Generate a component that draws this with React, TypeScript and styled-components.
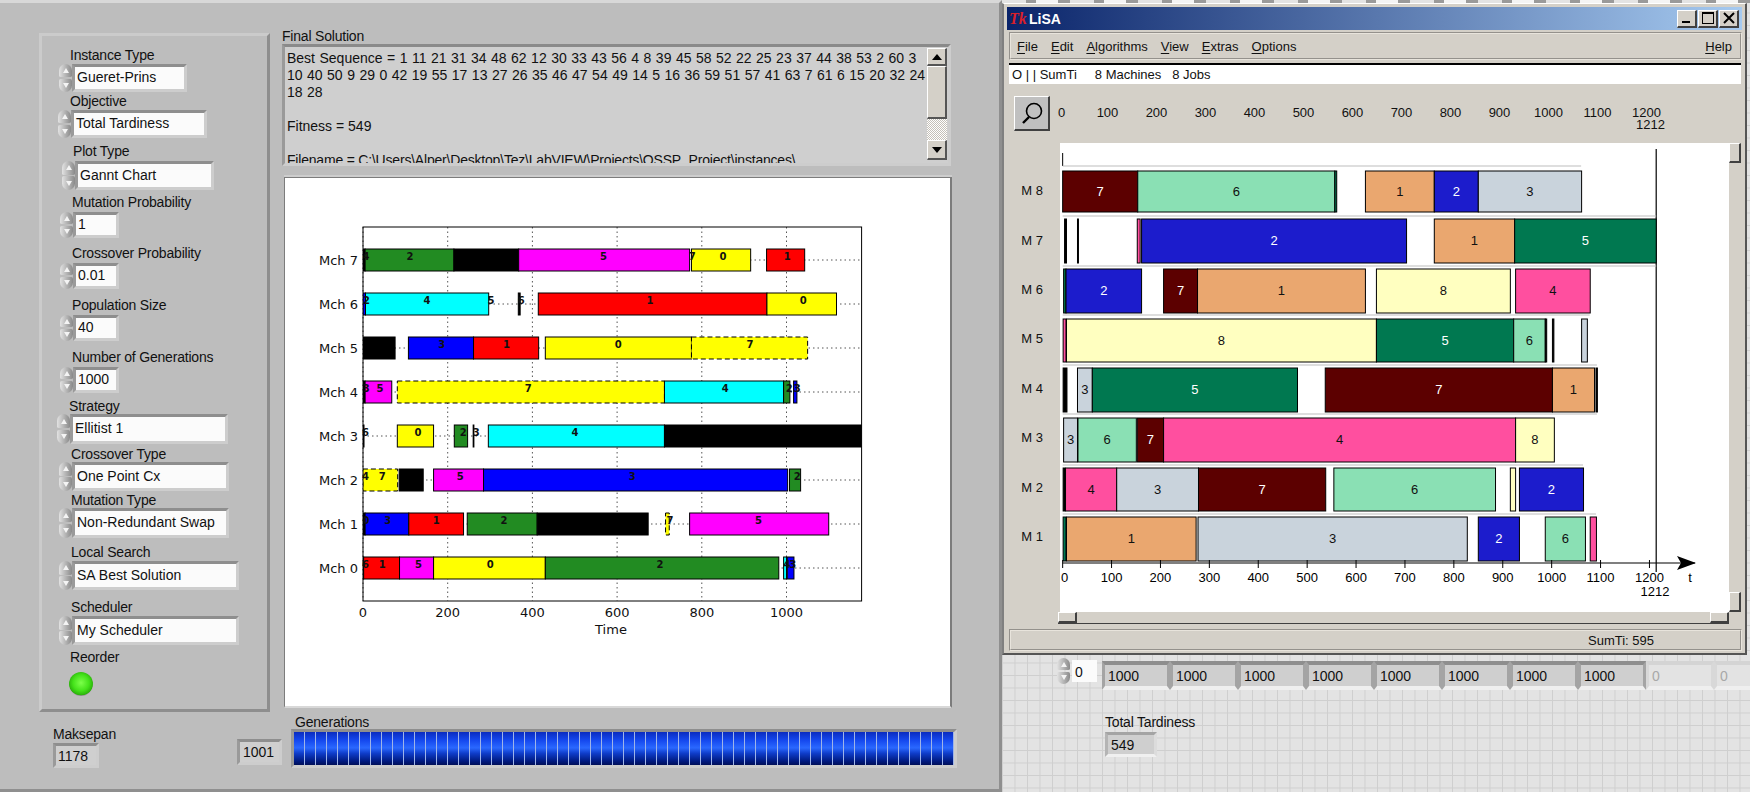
import React from 'react';
import styled, { createGlobalStyle } from 'styled-components';

const GlobalStyle = createGlobalStyle`
    html, body {
        margin: 0;
        padding: 0;
        background: #e3e3e3;
    }
    * {
        box-sizing: border-box;
    }
`;

const Page = styled.div`
    display: flex;
    width: 1750px;
    height: 792px;
    overflow: hidden;
    font-family: 'Liberation Sans', Arial, sans-serif;
    color: #111;
`;

/* ---------- LabVIEW front panel ---------- */

const FrontPanel = styled.div`
    flex: 0 0 1002px;
    height: 792px;
    background: #bdbdbd;
    border-top: 3px solid #d8d8d8;
    border-right: 3px solid #8f8f8f;
    border-bottom: 3px solid #8f8f8f;
`;

const MainRow = styled.div`
    display: flex;
    height: 709px;
    padding: 25px 0 0 39px;
`;

const GroupBox = styled.div`
    width: 231px;
    height: 679px;
    margin-top: 5px;
    border-style: solid;
    border-width: 3px;
    border-color: #cbcbcb #8e8e8e #8e8e8e #cbcbcb;
`;

const Control = styled.div<{ $top: number }>`
    margin-top: ${(p) => p.$top}px;
`;

const Label = styled.div<{ $left?: number }>`
    height: 16px;
    margin-left: ${(p) => p.$left ?? 0}px;
    font-size: 14px;
    letter-spacing: -0.2px;
    line-height: 16px;
    white-space: nowrap;
`;

const FieldRow = styled.div<{ $left: number; $gap: number }>`
    display: flex;
    align-items: center;
    margin-left: ${(p) => p.$left}px;
    margin-top: ${(p) => p.$gap}px;
`;

const SpinnerBody = styled.div<{ $height: number }>`
    display: flex;
    flex: 0 0 13px;
    flex-direction: column;
    justify-content: space-between;
    height: ${(p) => p.$height}px;
`;

const SpinButton = styled.div<{ $down?: boolean }>`
    display: flex;
    align-items: center;
    justify-content: center;
    height: 48%;
    background: linear-gradient(90deg, #e2e2e2, #a4a4a4 70%, #8a8a8a);
    border-radius: ${(p) => (p.$down ? '2px 2px 7px 7px' : '7px 7px 2px 2px')};
    &::after {
        content: '';
        border-left: 3px solid transparent;
        border-right: 3px solid transparent;
        border-top: ${(p) => (p.$down ? '5px solid #f4f4f4' : 'none')};
        border-bottom: ${(p) => (p.$down ? 'none' : '5px solid #f4f4f4')};
    }
`;

const Field = styled.div<{ $width: number; $height: number; $indicator?: boolean }>`
    display: flex;
    align-items: center;
    width: ${(p) => p.$width}px;
    height: ${(p) => p.$height}px;
    padding: 0 0 ${(p) => (p.$indicator ? 0 : 2)}px 2px;
    background: ${(p) => (p.$indicator ? '#cfcfcf' : '#fbfbfb')};
    border-style: solid;
    border-width: 3px;
    border-color: #8e8e8e #cdcdcd #cdcdcd #9a9a9a;
    font-size: 14px;
    white-space: nowrap;
`;

const Led = styled.div`
    width: 24px;
    height: 24px;
    margin: 7px 0 0 27px;
    border-radius: 50%;
    background: radial-gradient(circle at 50% 45%, #7cff4a 0, #44e21a 45%, #2db40c 68%, #8e8e8e 72%, #e0e0e0 100%);
`;

const SolutionColumn = styled.div`
    display: flex;
    flex-direction: column;
    width: 670px;
    margin-left: 12px;
`;

const TextBox = styled.div`
    display: flex;
    width: 669px;
    height: 122px;
    background: #cfcfcf;
    border-style: solid;
    border-width: 3px;
    border-color: #8a8a8a #cdcdcd #cdcdcd #9a9a9a;
`;

const TextContent = styled.div`
    flex: 1;
    min-width: 0;
    overflow: hidden;
    padding: 3px 0 0 2px;
    font-size: 14px;
    line-height: 17px;
`;

const TextLine = styled.div<{ $numbers?: boolean; $tight?: boolean }>`
    min-height: 17px;
    white-space: pre;
    word-spacing: ${(p) => (p.$numbers ? 0.58 : 0)}px;
    letter-spacing: ${(p) => (p.$tight ? -0.2 : 0)}px;
`;

const ScrollColumn = styled.div`
    display: flex;
    flex-direction: column;
    width: 20px;
    margin: 1px 1px 2px 0;
`;

const ScrollButton = styled.div<{ $height: number }>`
    display: flex;
    align-items: center;
    justify-content: center;
    height: ${(p) => p.$height}px;
    background: #d4d0c8;
    border-style: solid;
    border-width: 1px 2px 2px 1px;
    border-color: #ffffff #555 #555 #ffffff;
`;

const ArrowUp = styled.div`
    border-left: 5px solid transparent;
    border-right: 5px solid transparent;
    border-bottom: 6px solid #000;
`;

const ArrowDown = styled.div`
    border-left: 5px solid transparent;
    border-right: 5px solid transparent;
    border-top: 6px solid #000;
`;

const ScrollTrack = styled.div`
    height: 21px;
    background: repeating-conic-gradient(#ffffff 0 25%, #c4c0b8 0 50%) 0 0 / 2px 2px;
`;

const ChartFrame = styled.div`
    width: 668px;
    height: 531px;
    margin: 11px 0 0 2px;
    background: #fff;
    border-style: solid;
    border-width: 1px 2px 2px 1px;
    border-color: #7c7c7c #7c7c7c #d8d8d8 #7c7c7c;
    box-shadow: 0 -2px 0 #cdcdcd;
`;

const BottomRow = styled.div`
    display: flex;
    padding-left: 53px;
`;

const MaksepanBlock = styled.div`
    width: 46px;
    margin-top: 14px;
`;

const MaksepanField = styled(Field)`
    margin-top: 1px;
`;

const CounterField = styled(Field)`
    margin: 27px 0 0 138px;
    padding-left: 3px;
`;

const GenerationsBlock = styled.div`
    width: 666px;
    margin: 2px 0 0 9px;
`;

const GenerationsBar = styled.div`
    height: 39px;
    margin-top: -1px;
    border-style: solid;
    border-width: 3px;
    border-color: #8e8e8e #cdcdcd #cdcdcd #9a9a9a;
    background:
        repeating-linear-gradient(90deg, transparent 0 10px, #9fb4e8 10px 11px),
        linear-gradient(180deg, #0a2cc0 0, #1548ee 25%, #2a68ff 48%, #0f3cc8 65%, #001a80 88%, #000f58 100%);
`;

/* ---------- right side: LabVIEW diagram grid and LiSA window ---------- */

const GridArea = styled.div`
    flex: 1;
    min-width: 0;
    height: 792px;
    background-color: #e3e3e3;
    background-image:
        linear-gradient(#cfcfcf 1px, transparent 1px),
        linear-gradient(90deg, #cfcfcf 1px, transparent 1px);
    background-size: 12.5px 12.5px;
`;

const TopStrip = styled.div`
    height: 3px;
    background: repeating-linear-gradient(90deg, #e3e3e3 0 24px, #9a9a9a 24px 34px, #f4f4f4 34px 56px, #9a9a9a 56px 68px);
`;

const LisaWindow = styled.div`
    display: flex;
    flex-direction: column;
    width: 745px;
    height: 652px;
    padding: 3px 3px 0 3px;
    background: #d4d0c8;
    border-style: solid;
    border-width: 0 2px 2px 2px;
    border-color: #555;
    border-left-color: #808080;
    border-top: 1px solid #fff;
`;

const TitleBar = styled.div`
    display: flex;
    align-items: center;
    flex: 0 0 23px;
    padding: 0 3px 0 2px;
    background: linear-gradient(90deg, #0a246a, #a6caf0);
    color: #fff;
    font-size: 14px;
    font-weight: bold;
`;

const TkLogo = styled.span`
    width: 20px;
    color: #d8202a;
    font-family: 'Liberation Serif', serif;
    font-size: 16px;
    font-style: italic;
`;

const WindowButtons = styled.div`
    display: flex;
    gap: 1px;
    margin-left: auto;
`;

const WindowButton = styled.div`
    display: flex;
    align-items: center;
    justify-content: center;
    width: 20px;
    height: 18px;
    background: #d4d0c8;
    border-style: solid;
    border-width: 1px 2px 2px 1px;
    border-color: #fff #404040 #404040 #fff;
`;

const MenuBar = styled.div`
    display: flex;
    align-items: center;
    gap: 13px;
    height: 28px;
    margin: 2px 0 0 2px;
    padding: 0 8px 0 6px;
    border: 2px groove #e8e4dc;
    font-size: 13px;
`;

const MenuItem = styled.span<{ $right?: boolean }>`
    margin-left: ${(p) => (p.$right ? 'auto' : '0')};
    u {
        text-underline-offset: 2px;
    }
`;

const InfoBar = styled.div`
    display: flex;
    align-items: center;
    height: 21px;
    margin: 3px 1px 0 2px;
    padding-left: 3px;
    background: #fff;
    border-top: 2px solid #000;
    font-size: 13px;
    white-space: pre;
`;

const ToolRow = styled.div`
    display: flex;
    flex: 0 0 59px;
    margin-left: 2px;
`;

const ZoomButton = styled.div`
    display: flex;
    align-items: center;
    justify-content: center;
    width: 36px;
    height: 35px;
    margin: 12px 0 0 5px;
    background: #c0c0c0;
    border-style: solid;
    border-width: 1px 2px 2px 1px;
    border-color: #fff #404040 #404040 #fff;
`;

const Ruler = styled.div`
    margin-left: 4px;
    padding-top: 23px;
    font-size: 13px;
`;

const RulerRow = styled.div`
    display: flex;
    height: 12px;
    line-height: 12px;
`;

const RulerCell = styled.div<{ $first?: boolean }>`
    flex: 0 0 ${(p) => (p.$first ? 29 : 49)}px;
    padding-left: ${(p) => (p.$first ? 4 : 0)}px;
    text-align: ${(p) => (p.$first ? 'left' : 'center')};
`;

const RulerMark = styled.div`
    margin-left: 582px;
`;

const CanvasRow = styled.div`
    display: flex;
    flex: 0 0 469px;
    margin-left: 2px;
`;

const MachineColumn = styled.div`
    display: flex;
    flex: 0 0 51px;
    flex-direction: column;
    padding: 23px 17px 0 0;
    font-size: 13px;
`;

const MachineName = styled.div`
    display: flex;
    align-items: center;
    justify-content: flex-end;
    height: 49.4px;
`;

const GanttCanvas = styled.div`
    flex: 0 0 669px;
    background: #fff;
`;

const VScroll = styled.div`
    display: flex;
    flex: 0 0 12px;
    flex-direction: column;
    justify-content: space-between;
`;

const TkArrow = styled.div`
    height: 20px;
    background: #d4d0c8;
    border-style: solid;
    border-width: 1px 2px 2px 1px;
    border-color: #fff #404040 #404040 #fff;
`;

const HScroll = styled.div`
    display: flex;
    justify-content: space-between;
    flex: 0 0 11px;
    width: 671px;
    margin-left: 51px;
    border-bottom: 1px solid #404040;
`;

const TkHArrow = styled(TkArrow)`
    width: 19px;
    height: 11px;
`;

const StatusBar = styled.div`
    display: flex;
    align-items: center;
    justify-content: flex-end;
    height: 22px;
    margin: 5px 0 0 2px;
    padding-right: 86px;
    border: 2px groove #e8e4dc;
    font-size: 13px;
`;

const ArrayRow = styled.div`
    display: flex;
    align-items: flex-start;
    margin: 3px 0 0 55px;
`;

const IndexField = styled.div`
    flex: 0 0 25px;
    height: 22px;
    margin: 2px 5px 0 2px;
    padding-left: 3px;
    background: #fbfbfb;
    font-size: 14px;
    line-height: 24px;
`;

const ArrayCell = styled.div<{ $inactive?: boolean }>`
    flex: 0 0 68px;
    height: 29px;
    margin-top: 3px;
    padding-left: 3px;
    background: ${(p) => (p.$inactive ? '#e3e3e3' : '#cfcfcf')};
    border-style: solid;
    border-width: 4px 3px;
    border-color: ${(p) => (p.$inactive ? '#d4d4d4 #d8d8d8 #efefef' : '#8e8e8e #a4a4a4 #efefef')};
    color: ${(p) => (p.$inactive ? '#a8a8a8' : '#111')};
    font-size: 14px;
    line-height: 23px;
`;

const TardinessBlock = styled.div`
    margin: 24px 0 0 103px;
`;

const TardinessField = styled(Field)`
    margin-top: 2px;
    padding-left: 3px;
    border-color: #a4a4a4 #dcdcdc #f0f0f0 #b4b4b4;
`;

/* ---------- data ---------- */

type ControlSpec = {
    label: string;
    value: string;
    labelLeft: number;
    left: number;
    width: number;
    height: number;
    top: number;
    gap: number;
};

const controls: ControlSpec[] = [
    { label: 'Instance Type', value: 'Gueret-Prins', labelLeft: 28, left: 17, width: 115, height: 28, top: 11, gap: 1 },
    { label: 'Objective', value: 'Total Tardiness', labelLeft: 28, left: 16, width: 136, height: 28, top: 1, gap: 1 },
    { label: 'Plot Type', value: 'Gannt Chart', labelLeft: 31, left: 20, width: 139, height: 29, top: 5, gap: 2 },
    { label: 'Mutation Probability', value: '1', labelLeft: 30, left: 18, width: 46, height: 26, top: 4, gap: 2 },
    { label: 'Crossover Probability', value: '0.01', labelLeft: 30, left: 18, width: 46, height: 26, top: 7, gap: 2 },
    { label: 'Population Size', value: '40', labelLeft: 30, left: 18, width: 46, height: 26, top: 8, gap: 2 },
    { label: 'Number of Generations', value: '1000', labelLeft: 30, left: 18, width: 46, height: 26, top: 8, gap: 2 },
    { label: 'Strategy', value: 'Ellitist 1', labelLeft: 27, left: 15, width: 158, height: 30, top: 5, gap: 0 },
    { label: 'Crossover Type', value: 'One Point Cx', labelLeft: 29, left: 17, width: 157, height: 29, top: 2, gap: 0 },
    { label: 'Mutation Type', value: 'Non-Redundant Swap', labelLeft: 29, left: 17, width: 157, height: 30, top: 1, gap: 0 },
    { label: 'Local Search', value: 'SA Best Solution', labelLeft: 29, left: 17, width: 167, height: 29, top: 6, gap: 1 },
    { label: 'Scheduler', value: 'My Scheduler', labelLeft: 29, left: 17, width: 167, height: 29, top: 9, gap: 1 },
];

const sequenceLines = [
    'Best Sequence = 1 11 21 31 34 48 62 12 30 33 43 56 4 8 39 45 58 52 22 25 23 37 44 38 53 2 60 3',
    '10 40 50 9 29 0 42 19 55 17 13 27 26 35 46 47 54 49 14 5 16 36 59 51 57 41 63 7 61 6 15 20 32 24',
    '18 28',
];

// bars of the matplotlib chart, in px of the zoomed crop; converted by plotX
type PlotBar = [number, number, string, boolean?];
type PlotRow = { name: string; bars: PlotBar[]; labels: [number, string][] };

const G = '#228b22';
const Y = '#ffff00';
const R = '#ff0000';
const M = '#ff00ff';
const C = '#00ffff';
const B = '#0000ff';
const K = '#000000';

const plotRows: PlotRow[] = [
    {
        name: 'Mch 7',
        bars: [[170, 176, K], [176, 416, G], [416, 591, K], [591, 1053, M], [1058, 1218, Y], [1261, 1364, R]],
        labels: [[178, '4'], [297, '2'], [820, '5'], [1060, '7'], [1143, '0'], [1317, '1']],
    },
    {
        name: 'Mch 6',
        bars: [[170, 177, B], [177, 510, C], [590, 595, K], [644, 1262, R], [1262, 1450, Y]],
        labels: [[180, '2'], [343, '4'], [516, '5'], [598, '6'], [946, '1'], [1360, '0']],
    },
    {
        name: 'Mch 5',
        bars: [[170, 257, K], [293, 469, B], [469, 645, R], [663, 1058, Y], [1058, 1372, Y, true]],
        labels: [[383, '3'], [558, '1'], [860, '0'], [1216, '7']],
    },
    {
        name: 'Mch 4',
        bars: [[170, 176, K], [176, 248, M], [263, 985, Y, true], [985, 1307, C], [1307, 1324, G], [1334, 1343, B]],
        labels: [[179, '3'], [216, '5'], [617, '7'], [1149, '4'], [1322, '2'], [1344, '3']],
    },
    {
        name: 'Mch 3',
        bars: [[170, 173, K], [263, 361, Y], [417, 453, G], [468, 470, K], [509, 985, C], [985, 1518, K]],
        labels: [[177, '6'], [319, '0'], [441, '2'], [476, '3'], [743, '4']],
    },
    {
        name: 'Mch 2',
        bars: [[170, 264, Y, true], [268, 333, K], [361, 496, M], [496, 1318, B], [1323, 1353, G]],
        labels: [[177, '4'], [222, '7'], [433, '5'], [898, '3'], [1344, '2']],
    },
    {
        name: 'Mch 1',
        bars: [[170, 176, K], [176, 294, B], [294, 442, R], [452, 641, G], [641, 941, K], [988, 998, Y, true], [1053, 1429, M]],
        labels: [[178, '0'], [237, '3'], [368, '1'], [551, '2'], [1000, '7'], [1239, '5']],
    },
    {
        name: 'Mch 0',
        bars: [[170, 172, K], [172, 269, R], [269, 361, M], [361, 663, Y], [663, 1294, G], [1307, 1315, C], [1317, 1335, B]],
        labels: [[177, '6'], [222, '1'], [320, '5'], [514, '0'], [973, '2'], [1316, '4'], [1332, '3']],
    },
];

const plotX = (h: number) => h * 0.37 + 15;
const AXES = { left: 78, right: 576.6, top: 49, bottom: 423 };
const plotTicks = [0, 200, 400, 600, 800, 1000];
const tickX = (t: number) => AXES.left + t * 0.4235;

const jobColors: Record<number, string> = {
    0: '#000000',
    1: '#eaa76f',
    2: '#1c1ccc',
    3: '#c9d3dc',
    4: '#ff4f9f',
    5: '#007850',
    6: '#8ae0b4',
    7: '#5c0000',
    8: '#ffffc0',
};

type LisaRow = { y0: number; y1: number; sep: number; sepEnd: number; bars: [number, number, number][] };

// y in canvas px, bar x in px of the zoomed crop; converted by lisaX
const lisaRows: LisaRow[] = [
    { y0: 28, y1: 69, sep: 23, sepEnd: 1215, bars: [[131, 288, 7], [288, 700, 6], [700, 704, 5], [764, 908, 1], [908, 1000, 2], [1000, 1216, 3]] },
    { y0: 76, y1: 120, sep: 73, sepEnd: 1372, bars: [[135, 139, 0], [162, 164, 0], [287, 293, 4], [296, 850, 2], [908, 1076, 1], [1076, 1372, 5]] },
    { y0: 126, y1: 170, sep: 123, sepEnd: 1372, bars: [[133, 138, 5], [138, 296, 2], [342, 413, 7], [413, 764, 1], [787, 1067, 8], [1078, 1234, 4]] },
    { y0: 176, y1: 219, sep: 172, sepEnd: 1233, bars: [[132, 138, 4], [139, 787, 8], [787, 1074, 5], [1074, 1140, 6], [1140, 1143, 0], [1155, 1158, 0], [1216, 1228, 3]] },
    { y0: 225, y1: 269, sep: 222, sepEnd: 1248, bars: [[132, 140, 0], [162, 193, 3], [193, 622, 5], [680, 1155, 7], [1155, 1243, 1], [1246, 1249, 0]] },
    { y0: 275, y1: 319, sep: 271, sepEnd: 1248, bars: [[133, 162, 3], [163, 285, 6], [287, 342, 7], [342, 1078, 4], [1078, 1159, 8]] },
    { y0: 325, y1: 368, sep: 322, sepEnd: 1219, bars: [[132, 136, 0], [137, 244, 4], [244, 415, 3], [415, 681, 7], [698, 1036, 6], [1067, 1078, 8], [1086, 1220, 2]] },
    { y0: 374, y1: 418, sep: 371, sepEnd: 1246, bars: [[132, 138, 5], [139, 410, 1], [414, 977, 3], [1000, 1086, 2], [1140, 1224, 6], [1234, 1247, 4]] },
];

const lisaX = (h: number) => h * 0.4783 - 60;
const lightJobsText = [2, 5, 7];
const LISA_ZERO = lisaX(131);
const lisaTicks = Array.from({ length: 13 }, (_, i) => i * 100);
const lisaTickX = (t: number) => LISA_ZERO + t * 0.489;

const rulerValues = lisaTicks.slice(1);
const machines = ['M 8', 'M 7', 'M 6', 'M 5', 'M 4', 'M 3', 'M 2', 'M 1'];
const menuItems = ['File', 'Edit', 'Algorithms', 'View', 'Extras', 'Options'];
const arrayValues = ['1000', '1000', '1000', '1000', '1000', '1000', '1000', '1000', '0', '0'];

/* ---------- drawings ---------- */

const Spinner = ({ height }: { height: number }) => (
    <SpinnerBody $height={height}>
        <SpinButton />
        <SpinButton $down />
    </SpinnerBody>
);

const MatplotlibChart = () => (
    <svg width="665" height="528" style={{ display: 'block' }} fontFamily="'DejaVu Sans', sans-serif">
        <defs>
            <clipPath id="axes-clip">
                <rect x={AXES.left} y={AXES.top} width={AXES.right - AXES.left} height={AXES.bottom - AXES.top} />
            </clipPath>
        </defs>
        {plotTicks.map((t) => (
            <line key={t} x1={tickX(t)} x2={tickX(t)} y1={AXES.top} y2={AXES.bottom} stroke="#555" strokeDasharray="1.5 3" />
        ))}
        {plotRows.map((row, i) => (
            <line key={row.name} x1={AXES.left} x2={AXES.right} y1={82 + i * 44} y2={82 + i * 44} stroke="#555" strokeDasharray="1.5 3" />
        ))}
        <g clipPath="url(#axes-clip)">
            {plotRows.map((row, i) =>
                row.bars.map(([a, b, color, dashed]) => (
                    <rect
                        key={`${row.name}-${a}`}
                        x={plotX(a)}
                        y={71 + i * 44}
                        width={plotX(b) - plotX(a)}
                        height={22}
                        fill={color}
                        stroke="#000"
                        strokeWidth={1}
                        strokeDasharray={dashed ? '5 3' : undefined}
                    />
                )),
            )}
        </g>
        {plotRows.map((row, i) => (
            <g key={row.name}>
                <text x={73} y={82 + i * 44 + 5} textAnchor="end" fontSize="13" fill="#111">
                    {row.name}
                </text>
                {row.labels.map(([h, text]) => (
                    <text key={h} x={plotX(h)} y={82 + i * 44} textAnchor="middle" fontSize="10" fontWeight="bold" fill="#111">
                        {text}
                    </text>
                ))}
            </g>
        ))}
        <rect x={AXES.left} y={AXES.top} width={AXES.right - AXES.left} height={AXES.bottom - AXES.top} fill="none" stroke="#000" />
        {plotTicks.map((t) => (
            <text key={t} x={tickX(t)} y={439} textAnchor="middle" fontSize="13" fill="#111">
                {t}
            </text>
        ))}
        <text x={326} y={456} textAnchor="middle" fontSize="13" fill="#111">
            Time
        </text>
    </svg>
);

const LisaChart = () => (
    <svg width="669" height="469" style={{ display: 'block' }} fontFamily="'Liberation Sans', Arial, sans-serif" fontSize="13">
        <line x1={LISA_ZERO} x2={LISA_ZERO} y1={10} y2={23} stroke="#000" />
        <line x1={596.2} x2={596.2} y1={6} y2={429} stroke="#000" strokeWidth={1.2} />
        {lisaRows.map((row) => (
            <g key={row.y0}>
                <line x1={LISA_ZERO} x2={lisaX(row.sepEnd)} y1={row.sep} y2={row.sep} stroke="#bdbdbd" />
                {row.bars.map(([a, b, job]) => (
                    <g key={a}>
                        <rect
                            x={lisaX(a)}
                            y={row.y0}
                            width={lisaX(b) - lisaX(a)}
                            height={row.y1 - row.y0}
                            fill={jobColors[job]}
                            stroke="#000"
                        />
                        {b - a >= 25 && job !== 0 && (
                            <text
                                x={(lisaX(a) + lisaX(b)) / 2}
                                y={(row.y0 + row.y1) / 2 + 4}
                                textAnchor="middle"
                                fill={lightJobsText.includes(job) ? '#fff' : '#111'}
                            >
                                {job}
                            </text>
                        )}
                    </g>
                ))}
            </g>
        ))}
        <line x1={LISA_ZERO} x2={635} y1={420} y2={420} stroke="#000" strokeWidth={1.2} />
        <polygon points="617,413 636,420 617,427 621,420" fill="#000" />
        {lisaTicks.map((t) => (
            <g key={t}>
                <line x1={lisaTickX(t)} x2={lisaTickX(t)} y1={417} y2={425} stroke="#000" />
                <text x={t === 0 ? lisaTickX(t) + 2 : lisaTickX(t)} y={439} textAnchor="middle">
                    {t}
                </text>
            </g>
        ))}
        <text x={630} y={439} textAnchor="middle">
            t
        </text>
        <text x={595} y={453} textAnchor="middle">
            1212
        </text>
    </svg>
);

const App = () => (
    <Page>
        <GlobalStyle />
        <FrontPanel>
            <MainRow>
                <GroupBox>
                    {controls.map((c) => (
                        <Control key={c.label} $top={c.top}>
                            <Label $left={c.labelLeft}>{c.label}</Label>
                            <FieldRow $left={c.left} $gap={c.gap}>
                                <Spinner height={c.height} />
                                <Field $width={c.width} $height={c.height}>
                                    {c.value}
                                </Field>
                            </FieldRow>
                        </Control>
                    ))}
                    <Control $top={4}>
                        <Label $left={28}>Reorder</Label>
                        <Led />
                    </Control>
                </GroupBox>
                <SolutionColumn>
                    <Label>Final Solution</Label>
                    <TextBox>
                        <TextContent>
                            {sequenceLines.map((line) => (
                                <TextLine key={line} $numbers>
                                    {line}
                                </TextLine>
                            ))}
                            <TextLine />
                            <TextLine>Fitness = 549</TextLine>
                            <TextLine />
                            <TextLine $tight>{'Filename = C:\\Users\\Alper\\Desktop\\Tez\\LabVIEW\\Projects\\OSSP_Project\\instances\\'}</TextLine>
                        </TextContent>
                        <ScrollColumn>
                            <ScrollButton $height={18}>
                                <ArrowUp />
                            </ScrollButton>
                            <ScrollButton $height={53} />
                            <ScrollTrack />
                            <ScrollButton $height={20}>
                                <ArrowDown />
                            </ScrollButton>
                        </ScrollColumn>
                    </TextBox>
                    <ChartFrame>
                        <MatplotlibChart />
                    </ChartFrame>
                </SolutionColumn>
            </MainRow>
            <BottomRow>
                <MaksepanBlock>
                    <Label>Maksepan</Label>
                    <MaksepanField $indicator $width={46} $height={25}>
                        1178
                    </MaksepanField>
                </MaksepanBlock>
                <CounterField $indicator $width={45} $height={26}>
                    1001
                </CounterField>
                <GenerationsBlock>
                    <Label $left={4}>Generations</Label>
                    <GenerationsBar />
                </GenerationsBlock>
            </BottomRow>
        </FrontPanel>
        <GridArea>
            <TopStrip />
            <LisaWindow>
                <TitleBar>
                    <TkLogo>Tk</TkLogo>
                    LiSA
                    <WindowButtons>
                        <WindowButton>
                            <svg width="12" height="12">
                                <rect x="1" y="9" width="8" height="2" fill="#000" />
                            </svg>
                        </WindowButton>
                        <WindowButton>
                            <svg width="12" height="12">
                                <rect x="0.5" y="0.5" width="11" height="11" fill="none" stroke="#000" />
                                <rect x="0" y="0" width="12" height="2" fill="#000" />
                            </svg>
                        </WindowButton>
                        <WindowButton>
                            <svg width="12" height="12">
                                <path d="M1 1 L11 11 M11 1 L1 11" stroke="#000" strokeWidth="2" />
                            </svg>
                        </WindowButton>
                    </WindowButtons>
                </TitleBar>
                <MenuBar>
                    {menuItems.map((m) => (
                        <MenuItem key={m}>
                            <u>{m[0]}</u>
                            {m.slice(1)}
                        </MenuItem>
                    ))}
                    <MenuItem $right>
                        <u>H</u>elp
                    </MenuItem>
                </MenuBar>
                <InfoBar>{'O | | SumTi     8 Machines   8 Jobs'}</InfoBar>
                <ToolRow>
                    <ZoomButton>
                        <svg width="24" height="24" viewBox="0 0 24 24" fill="none" stroke="#000">
                            <circle cx="14" cy="10" r="7.5" strokeWidth="1.6" />
                            <path d="M9 16 L3 22" strokeWidth="2.4" />
                        </svg>
                    </ZoomButton>
                    <Ruler>
                        <RulerRow>
                            <RulerCell $first>0</RulerCell>
                            {rulerValues.map((v) => (
                                <RulerCell key={v}>{v}</RulerCell>
                            ))}
                        </RulerRow>
                        <RulerRow>
                            <RulerMark>1212</RulerMark>
                        </RulerRow>
                    </Ruler>
                </ToolRow>
                <CanvasRow>
                    <MachineColumn>
                        {machines.map((m) => (
                            <MachineName key={m}>{m}</MachineName>
                        ))}
                    </MachineColumn>
                    <GanttCanvas>
                        <LisaChart />
                    </GanttCanvas>
                    <VScroll>
                        <TkArrow />
                        <TkArrow />
                    </VScroll>
                </CanvasRow>
                <HScroll>
                    <TkHArrow />
                    <TkHArrow />
                </HScroll>
                <StatusBar>SumTi: 595</StatusBar>
            </LisaWindow>
            <ArrayRow>
                <Spinner height={26} />
                <IndexField>0</IndexField>
                {arrayValues.map((v, i) => (
                    <ArrayCell key={i} $inactive={v === '0'}>
                        {v}
                    </ArrayCell>
                ))}
            </ArrayRow>
            <TardinessBlock>
                <Label>Total Tardiness</Label>
                <TardinessField $indicator $width={52} $height={25}>
                    549
                </TardinessField>
            </TardinessBlock>
        </GridArea>
    </Page>
);

export default App;
